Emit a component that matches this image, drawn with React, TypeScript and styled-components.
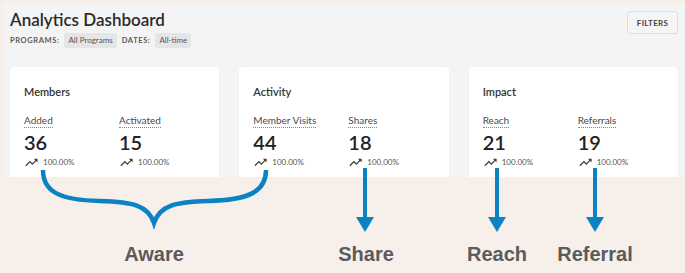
import React from 'react';
import styled, {createGlobalStyle} from 'styled-components';

const GlobalStyle = createGlobalStyle`
  html, body {
    margin: 0;
    padding: 0;
    background: #f7efea;
  }
  * {
    box-sizing: border-box;
  }
`;

const BLUE = '#0b82c4';

interface MetricData {
    label: string;
    value: number;
}

interface CardData {
    title: string;
    metrics: MetricData[];
}

const cards: CardData[] = [
    {title: 'Members', metrics: [{label: 'Added', value: 36}, {label: 'Activated', value: 15}]},
    {title: 'Activity', metrics: [{label: 'Member Visits', value: 44}, {label: 'Shares', value: 18}]},
    {title: 'Impact', metrics: [{label: 'Reach', value: 21}, {label: 'Referrals', value: 19}]},
];

const stages = [
    {label: 'Aware', x: 154},
    {label: 'Share', x: 366},
    {label: 'Reach', x: 497},
    {label: 'Referral', x: 595},
];

const Page = styled.div`
  position: relative;
  width: 685px;
  height: 273px;
  padding: 3px 0 0 3px;
  overflow: hidden;
  font-family: Lato, "Open Sans", sans-serif;
`;

const Dashboard = styled.div`
  height: 174px;
  background: #f4f4f4;
  padding: 7px 7px 0 7px;
  overflow: hidden;
`;

const Header = styled.div`
  display: flex;
  justify-content: space-between;
  align-items: flex-start;
`;

const Title = styled.h1`
  margin: 0;
  font-size: 17px;
  line-height: 20px;
  font-weight: 600;
  color: #2b2b2b;
`;

const FilterRow = styled.div`
  display: flex;
  align-items: center;
  gap: 5px;
  margin-top: 3px;
`;

const FilterLabel = styled.span`
  font-size: 7.5px;
  font-weight: 700;
  letter-spacing: 0.6px;
  color: #5a5a5a;
`;

const Chip = styled.span`
  display: inline-block;
  height: 15px;
  line-height: 15px;
  padding: 0 4px;
  border-radius: 2px;
  background: #e5e5e5;
  font-size: 8px;
  color: #555;
`;

const FiltersButton = styled.button`
  margin: 1px 0 0 0;
  height: 23px;
  width: 51px;
  padding: 0;
  border: 1px solid #dcdcdc;
  border-radius: 3px;
  background: #f5f5f5;
  font-family: Lato, sans-serif;
  font-size: 8px;
  font-weight: 700;
  letter-spacing: 0.3px;
  color: #444;
`;

const CardGrid = styled.div`
  display: grid;
  grid-template-columns: repeat(3, minmax(0, 1fr));
  gap: 20px;
  margin-top: 19px;
`;

const Card = styled.div`
  background: #fff;
  border-radius: 3px;
  height: 140px;
  padding: 18px 14px;
  box-shadow: 0 0 1px rgba(0, 0, 0, 0.06);
`;

const CardTitle = styled.div`
  font-size: 11px;
  line-height: 14px;
  font-weight: 600;
  color: #333;
`;

const MetricRow = styled.div`
  display: grid;
  grid-template-columns: 95px minmax(0, 1fr);
  margin-top: 15px;
`;

const Metric = styled.div`
  display: flex;
  flex-direction: column;
  align-items: flex-start;
`;

const MetricLabel = styled.span`
  font-size: 10px;
  line-height: 13px;
  color: #4a4a4a;
  border-bottom: 1px dotted #888;
`;

const MetricValue = styled.div`
  margin-top: 3px;
  font-size: 20px;
  line-height: 22px;
  font-weight: 600;
  color: #222;
`;

const Trend = styled.div`
  display: flex;
  align-items: center;
  gap: 4px;
  margin-top: 3px;
  font-size: 8px;
  line-height: 12px;
  color: #555;
`;

const Annotations = styled.div`
  position: absolute;
  inset: 0;
  pointer-events: none;
`;

const Drawing = styled.svg`
  position: absolute;
  left: 0;
  top: 0;
`;

const StageLabel = styled.span`
  position: absolute;
  top: 243px;
  transform: translateX(-50%);
  font-family: "Liberation Sans", Arial, sans-serif;
  font-size: 20px;
  font-weight: 700;
  line-height: 22px;
  color: #5b5b5b;
`;

function TrendIcon() {
    return (
        <svg width="15" height="11" viewBox="0 3 24 18" fill="#3d3d3d">
            <path d="M16 6l2.29 2.29-4.88 4.88-4-4L2 16.59 3.41 18l6-6 4 4 6.3-6.29L22 12V6z"/>
        </svg>
    );
}

function Arrow({x}: {x: number}) {
    return (
        <>
            <line x1={x} y1={168} x2={x} y2={220} stroke={BLUE} strokeWidth={4}/>
            <polygon points={`${x - 9},217 ${x + 9},217 ${x},232`} fill={BLUE}/>
        </>
    );
}

export default function App() {
    return (
        <>
            <GlobalStyle/>
            <Page>
                <Dashboard>
                    <Header>
                        <div>
                            <Title>Analytics Dashboard</Title>
                            <FilterRow>
                                <FilterLabel>PROGRAMS:</FilterLabel>
                                <Chip>All Programs</Chip>
                                <FilterLabel>DATES:</FilterLabel>
                                <Chip>All-time</Chip>
                            </FilterRow>
                        </div>
                        <FiltersButton>FILTERS</FiltersButton>
                    </Header>
                    <CardGrid>
                        {cards.map(card => (
                            <Card key={card.title}>
                                <CardTitle>{card.title}</CardTitle>
                                <MetricRow>
                                    {card.metrics.map(m => (
                                        <Metric key={m.label}>
                                            <MetricLabel>{m.label}</MetricLabel>
                                            <MetricValue>{m.value}</MetricValue>
                                            <Trend>
                                                <TrendIcon/>
                                                <span>100.00%</span>
                                            </Trend>
                                        </Metric>
                                    ))}
                                </MetricRow>
                            </Card>
                        ))}
                    </CardGrid>
                </Dashboard>
                <Annotations>
                    <Drawing width="685" height="273" viewBox="0 0 685 273">
                        <path
                            d="M43,170 C43,192 60,200 100,201 C132,202 148,205 154,223 C160,205 176,202 208,201 C248,200 266,192 266,170"
                            fill="none"
                            stroke={BLUE}
                            strokeWidth={4.5}
                            strokeLinejoin="miter"
                        />
                        <Arrow x={365}/>
                        <Arrow x={497}/>
                        <Arrow x={595}/>
                    </Drawing>
                    {stages.map(s => (
                        <StageLabel key={s.label} style={{left: s.x}}>{s.label}</StageLabel>
                    ))}
                </Annotations>
            </Page>
        </>
    );
}
